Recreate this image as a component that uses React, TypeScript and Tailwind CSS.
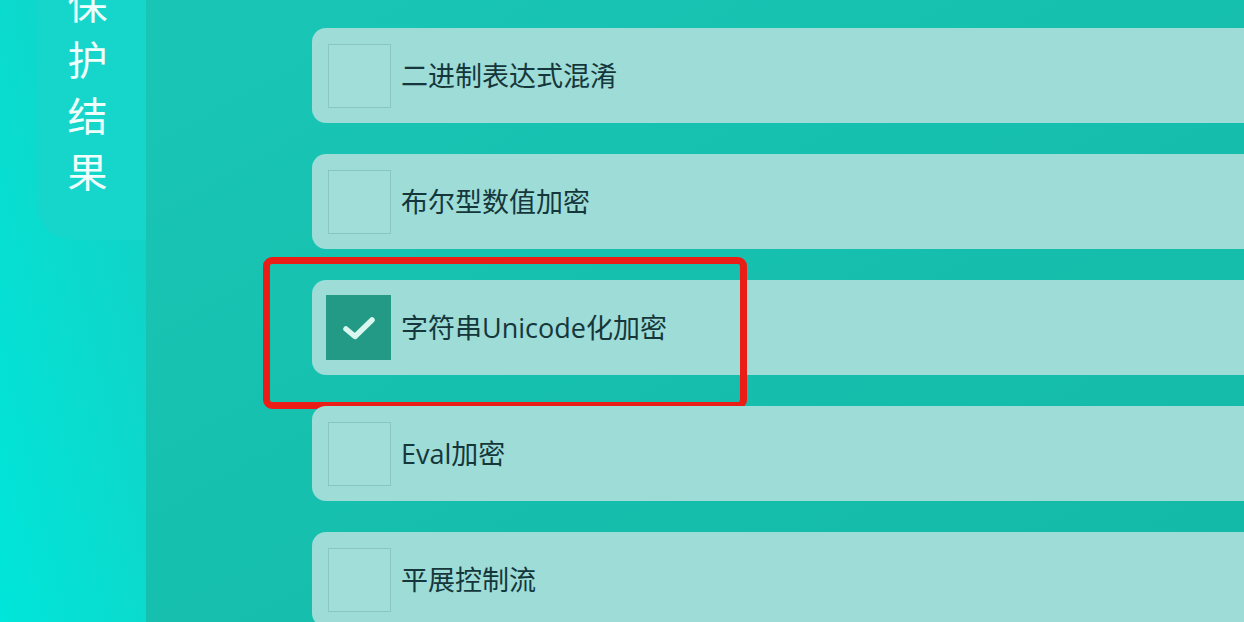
import React from "react";

const FONT = '"Open Sans", "Noto Sans CJK SC", sans-serif';

const options = [
  { label: "二进制表达式混淆", checked: false },
  { label: "布尔型数值加密", checked: false },
  { label: "字符串Unicode化加密", checked: true, highlight: true },
  { label: "Eval加密", checked: false },
  { label: "平展控制流", checked: false },
];

function CheckBox({ checked }: { checked: boolean }) {
  if (checked) {
    return (
      <div className="ml-[-2px] flex h-[65px] w-[65px] shrink-0 items-center justify-center bg-[#229a85]">
        <svg width="36" height="28" viewBox="0 0 36 28" fill="none">
          <path
            d="M5 15 L14 22.5 L31 6"
            stroke="#d9f6ef"
            strokeWidth="5.5"
            strokeLinecap="round"
            strokeLinejoin="round"
          />
        </svg>
      </div>
    );
  }
  return (
    <div className="h-[64px] w-[63px] shrink-0 border border-[#86c8c0] bg-[#a2ded9]" />
  );
}

function OptionRow({
  label,
  checked,
  highlight,
}: {
  label: string;
  checked: boolean;
  highlight?: boolean;
}) {
  return (
    <div className="relative">
      <div className="flex h-[95px] items-center rounded-l-[14px] bg-[#9ddcd7] pl-4">
        <CheckBox checked={checked} />
        <span
          className="ml-[10px] text-[27px] leading-none text-[#15373b]"
          style={{ fontFamily: FONT }}
        >
          {label}
        </span>
      </div>
      {highlight && (
        <div className="pointer-events-none absolute left-[-49px] top-[-23px] h-[152px] w-[484px] rounded-[9px] border-[7px] border-[#ea1d17]" />
      )}
    </div>
  );
}

export default function App() {
  return (
    <div className="flex h-[622px] w-full overflow-hidden" style={{ fontFamily: FONT }}>
      {/* side rail */}
      <div className="h-full w-[146px] shrink-0 bg-gradient-to-tr from-[#00e6da] to-[#12cfc2]">
        <div className="ml-[37px] flex h-[240px] flex-col items-center justify-end rounded-bl-[36px] bg-[#16d6cb] pb-[42px] pr-[8px]">
          {["保", "护", "结", "果"].map((c) => (
            <span
              key={c}
              className="block h-[56px] text-[40px] leading-[56px] text-[#eefffd]"
              style={{ fontFamily: '"Noto Sans CJK SC", sans-serif' }}
            >
              {c}
            </span>
          ))}
        </div>
      </div>
      {/* option list */}
      <div className="flex flex-1 flex-col gap-[31px] bg-gradient-to-br from-[#19c6b6] to-[#13b9a6] pl-[166px] pt-[28px]">
        {options.map((o) => (
          <OptionRow key={o.label} {...o} />
        ))}
      </div>
    </div>
  );
}
